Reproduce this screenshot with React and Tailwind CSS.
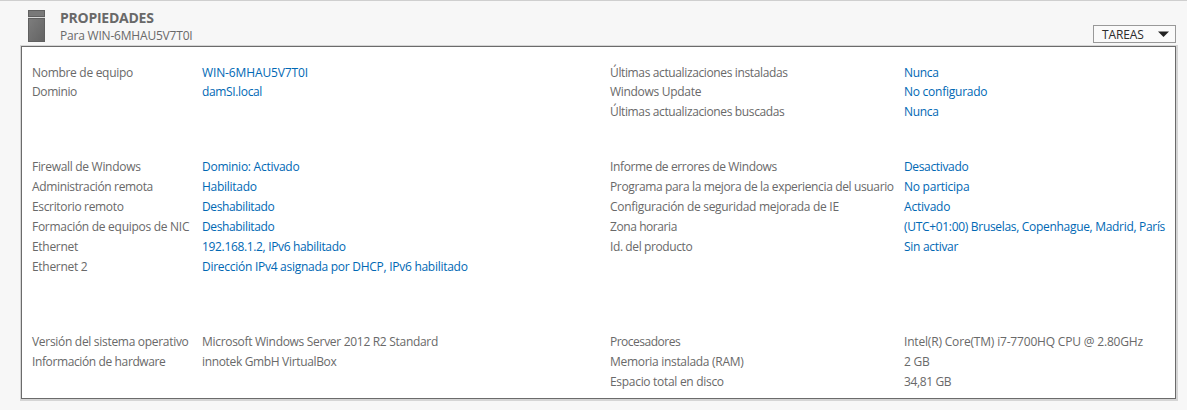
const sections = [
  {
    left: [
      ['Nombre de equipo', 'WIN-6MHAU5V7T0I', '', 'tracking-[-0.13px]'],
      ['Dominio', 'damSI.local', 'tracking-[-0.4px]', 'tracking-[-0.35px]'],
    ],
    right: [
      ['Últimas actualizaciones instaladas', 'Nunca', 'tracking-[-0.37px]', ''],
      ['Windows Update', 'No configurado', '', 'tracking-[-0.25px]'],
      ['Últimas actualizaciones buscadas', 'Nunca', 'tracking-[-0.37px]', ''],
    ],
    height: 'h-[95px]',
    firstRow: 'mt-px h-[19px] leading-[19px]',
    link: true,
  },
  {
    left: [
      ['Firewall de Windows', 'Dominio: Activado', 'tracking-[-0.3px]', 'tracking-[-0.26px]'],
      ['Administración remota', 'Habilitado', 'tracking-[-0.36px]', 'tracking-[-0.28px]'],
      ['Escritorio remoto', 'Deshabilitado', 'tracking-[-0.34px]', 'tracking-[-0.37px]'],
      ['Formación de equipos de NIC', 'Deshabilitado', 'tracking-[-0.28px]', 'tracking-[-0.37px]'],
      ['Ethernet', '192.168.1.2, IPv6 habilitado', '', 'tracking-[-0.34px]'],
      ['Ethernet 2', 'Dirección IPv4 asignada por DHCP, IPv6 habilitado', '', 'tracking-[-0.27px]'],
    ],
    right: [
      ['Informe de errores de Windows', 'Desactivado', 'tracking-[-0.37px]', 'tracking-[-0.35px]'],
      ['Programa para la mejora de la experiencia del usuario', 'No participa', 'tracking-[-0.36px]', 'tracking-[-0.25px]'],
      ['Configuración de seguridad mejorada de IE', 'Activado', '', 'tracking-[-0.2px]'],
      ['Zona horaria', '(UTC+01:00) Bruselas, Copenhague, Madrid, París', 'tracking-[-0.42px]', 'tracking-[-0.31px]'],
      ['Id. del producto', 'Sin activar', 'tracking-[-0.4px]', ''],
    ],
    height: 'h-[175px]',
    firstRow: 'h-5',
    link: true,
  },
  {
    left: [
      ['Versión del sistema operativo', 'Microsoft Windows Server 2012 R2 Standard', '', ''],
      ['Información de hardware', 'innotek GmbH VirtualBox', 'tracking-[-0.38px]', 'tracking-[-0.34px]'],
    ],
    right: [
      ['Procesadores', 'Intel(R) Core(TM) i7-7700HQ CPU @ 2.80GHz', 'tracking-[-0.5px]', 'tracking-[-0.18px]'],
      ['Memoria instalada (RAM)', '2 GB', '', 'tracking-[-0.2px]'],
      ['Espacio total en disco', '34,81 GB', '', 'tracking-[-0.38px]'],
    ],
    height: 'h-[60px]',
    firstRow: 'h-5',
    link: false,
  },
];

function Rows({ rows, firstRow, link, labelWidth }) {
  return (
    <dl>
      {rows.map(([label, value, labelTracking, valueTracking], i) => (
        <div key={label} className={`flex items-center whitespace-nowrap ${i === 0 ? firstRow : 'h-5'}`}>
          <dt className={`${labelWidth} shrink-0 ${labelTracking || 'tracking-[-0.3px]'}`}>{label}</dt>
          <dd className={`${link ? 'text-[#0068b4]' : ''} ${valueTracking || 'tracking-[-0.3px]'}`}>{value}</dd>
        </div>
      ))}
    </dl>
  );
}

export default function App() {
  return (
    <div className="h-[410px] w-[1187px] overflow-hidden border-t border-[#cfcfcf] bg-[#f7f7f7] pr-[9px] pl-5 font-['Open_Sans','Noto_Sans',sans-serif] text-[12px] leading-[19px] text-[#696969]">
      <header className="flex h-11 justify-between">
        <div className="flex pt-[9px] pl-2">
          <svg width="17" height="32" viewBox="0 0 17 32" aria-hidden="true">
            <defs>
              <linearGradient id="server" x1="0" y1="0" x2="1" y2="1">
                <stop offset="0" stopColor="#7d7d7d" />
                <stop offset="1" stopColor="#636363" />
              </linearGradient>
            </defs>
            <rect x="0.5" y="0.5" width="16" height="6" fill="#797979" stroke="#606060" />
            <rect y="7" width="17" height="1" fill="#d8d8d8" />
            <rect x="0.5" y="8.5" width="16" height="23" fill="url(#server)" stroke="#606060" />
          </svg>
          <div className="pl-[15px]">
            <h1 className="h-[17px] text-[14px] leading-[15px] font-bold tracking-[-0.25px]">PROPIEDADES</h1>
            <p className="text-[12px] leading-[17px] tracking-[-0.2px]">Para WIN-6MHAU5V7T0I</p>
          </div>
        </div>
        <button className="mt-6 mr-0.5 flex h-[18px] w-[83px] items-center justify-between border border-[#999999] bg-[#fafafa] pt-px pr-[6px] pl-2 text-[#2b2b2b]">
          <span className="tracking-[-0.1px]">TAREAS</span>
          <svg width="11" height="6" viewBox="0 0 11 6" className="-mt-px" aria-hidden="true">
            <path d="M0 0.5H11L5.5 6Z" fill="#222" />
          </svg>
        </button>
      </header>
      <main className="h-[356px] w-[1158px] border-t border-r-2 border-b-2 border-l border-[#d5d5d5]">
        <div className="h-[353px] border border-[#6b6b6b] bg-white pt-[15px] pl-[10px]">
          {sections.map((section) => (
            <section key={section.height} className={`${section.height} grid grid-cols-[578px_1fr] leading-[18px]`}>
              <Rows rows={section.left} firstRow={section.firstRow} link={section.link} labelWidth="w-[170px]" />
              <Rows rows={section.right} firstRow={section.firstRow} link={section.link} labelWidth="w-[294px]" />
            </section>
          ))}
        </div>
      </main>
    </div>
  );
}
